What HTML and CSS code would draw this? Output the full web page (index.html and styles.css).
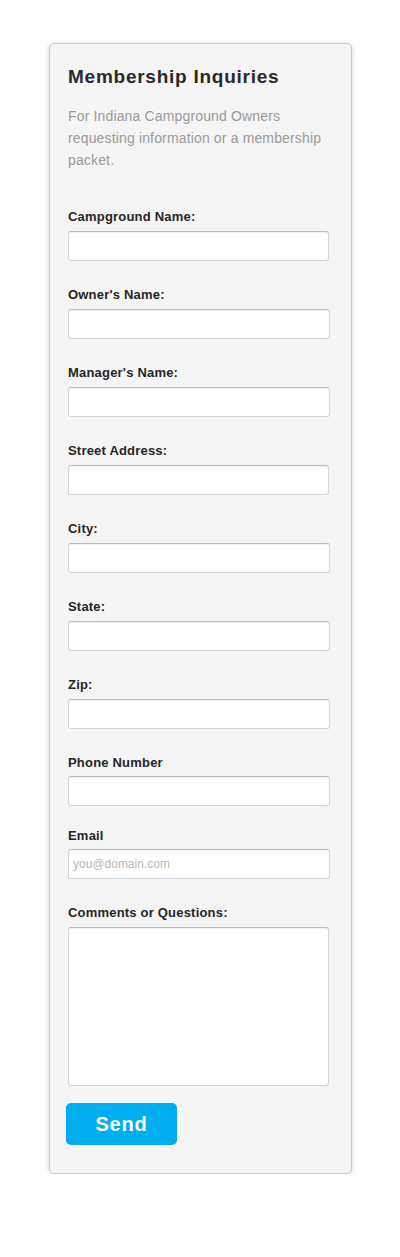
FILE: index.html
```html
<!DOCTYPE html>
<html>
<head>
<meta charset="utf-8">
<link rel="stylesheet" href="styles.css">
</head>
<body>
<div class="card">
  <h1 class="title">Membership Inquiries</h1>
  <p class="desc">For Indiana Campground Owners requesting information or a membership packet.</p>
  <form class="form">
    <div class="field"><label class="label">Campground Name:</label><input class="input narrow" type="text"></div>
    <div class="field"><label class="label">Owner's Name:</label><input class="input" type="text"></div>
    <div class="field"><label class="label">Manager's Name:</label><input class="input" type="text"></div>
    <div class="field"><label class="label">Street Address:</label><input class="input narrow" type="text"></div>
    <div class="field"><label class="label">City:</label><input class="input" type="text"></div>
    <div class="field"><label class="label">State:</label><input class="input" type="text"></div>
    <div class="field"><label class="label">Zip:</label><input class="input" type="text"></div>
    <div class="field field-tight"><label class="label label-tight">Phone Number</label><input class="input" type="text"></div>
    <div class="field"><label class="label label-tight">Email</label><input class="input" type="text" placeholder="you@domain.com"></div>
    <div class="field field-last"><label class="label">Comments or Questions:</label><textarea class="input textarea"></textarea></div>
    <button class="send" type="button">Send</button>
  </form>
</div>
</body>
</html>
```

FILE: styles.css
```css
html, body {
  margin: 0;
  padding: 0;
  background: #ffffff;
}
body {
  font-family: "Liberation Sans", Arial, sans-serif;
}
.card {
  box-sizing: border-box;
  width: 303px;
  margin: 43px 0 0 49px;
  padding: 21px 21px 28px 18px;
  background: #f5f5f5;
  border: 1px solid #c9c9c9;
  border-radius: 5px;
  box-shadow: 0 1px 5px rgba(0, 0, 0, 0.18);
}
.title {
  margin: 0;
  font-size: 19px;
  line-height: 24px;
  font-weight: bold;
  color: #2b2b2b;
  letter-spacing: 0.75px;
}
.desc {
  margin: 16px 0 0 0;
  font-size: 14px;
  line-height: 22px;
  color: #9a9a9a;
  letter-spacing: 0.15px;
  padding-right: 0;
}
.form {
  display: flex;
  flex-direction: column;
  margin-top: 38px;
}
.field {
  display: flex;
  flex-direction: column;
  margin-bottom: 26px;
}
.field-tight {
  margin-bottom: 22px;
}
.field-last {
  margin-bottom: 17px;
}
.label {
  font-size: 13px;
  line-height: 16px;
  font-weight: bold;
  color: #262626;
  letter-spacing: 0.2px;
  margin-bottom: 6px;
}
.label-tight {
  margin-bottom: 5px;
}
.input {
  box-sizing: border-box;
  width: 262px;
  height: 30px;
  margin: 0;
  padding: 0 4px;
  background: #ffffff;
  border: 1px solid #d3d3d8;
  border-top-color: #b9b9b9;
  border-radius: 3px;
  box-shadow: inset 0 1px 1px rgba(0, 0, 0, 0.06);
  font-family: "Liberation Sans", Arial, sans-serif;
  font-size: 12px;
  color: #333;
  outline: none;
}
.narrow {
  width: 261px;
}
.input::placeholder {
  color: #b8b8b8;
}
.textarea {
  width: 261px;
  height: 159px;
  resize: none;
  display: block;
}
.send {
  align-self: flex-start;
  width: 111px;
  height: 42px;
  margin-left: -2px;
  padding: 0;
  border: none;
  border-radius: 5px;
  background: #00aeef;
  color: #ffffff;
  font-family: "Liberation Sans", Arial, sans-serif;
  font-size: 20px;
  font-weight: bold;
  letter-spacing: 0.8px;
  cursor: pointer;
}
```
